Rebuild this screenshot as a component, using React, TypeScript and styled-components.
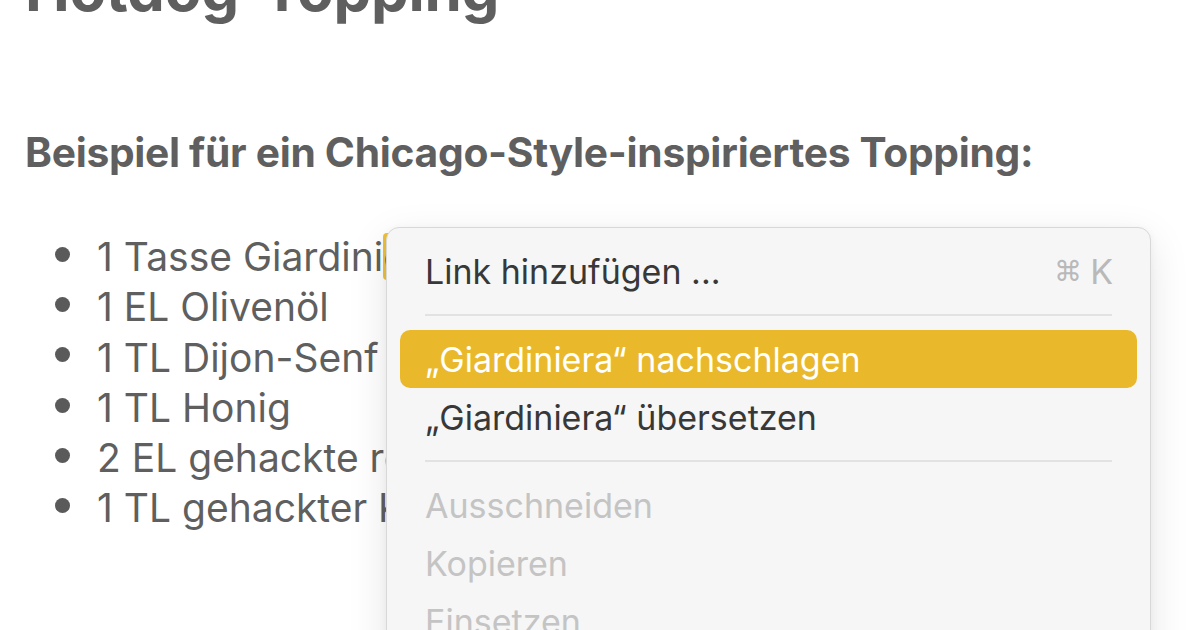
import React from "react";
import styled, { createGlobalStyle } from "styled-components";

const Global = createGlobalStyle`
  html, body { margin: 0; padding: 0; background: #ffffff; }
  body { font-family: Inter, "Noto Sans", "Liberation Sans", sans-serif; overflow: hidden; }
  #root { width: 1200px; height: 630px; overflow: hidden; position: relative; }
`;

const Page = styled.div`
  position: relative;
  width: 1200px;
  height: 630px;
  overflow: hidden;
  padding-left: 25px;
  box-sizing: border-box;
  color: #5f5f5f;
`;

const Title = styled.h1`
  margin: -41px 0 0 0;
  font-size: 60px;
  line-height: 60px;
  font-weight: 700;
  letter-spacing: -0.3px;
  white-space: nowrap;
`;

const Heading = styled.h2`
  margin: 111px 0 0 0;
  font-size: 40.75px;
  line-height: 46px;
  font-weight: 700;
  letter-spacing: -0.3px;
  white-space: nowrap;
`;

const List = styled.ul`
  list-style: none;
  margin: 56px 0 0 0;
  padding: 0 0 0 30px;
`;

const Item = styled.li`
  display: flex;
  align-items: center;
  gap: 27px;
  font-size: 39px;
  line-height: 50.3px;
  white-space: nowrap;
`;

const Bullet = styled.span`
  flex: none;
  width: 15px;
  height: 15px;
  border-radius: 50%;
  background: #5a5a5a;
  margin-top: -6px;
`;

const Mark = styled.span`
  background: #f0c23b;
  border-radius: 4px 0 0 4px;
`;

const Menu = styled.div`
  position: absolute;
  left: 386px;
  top: 227px;
  width: 765px;
  height: 520px;
  box-sizing: border-box;
  padding: 14px 13px;
  background: #f6f6f6;
  border: 1px solid #d8d8d8;
  border-radius: 13px;
  box-shadow: 0 12px 40px rgba(0, 0, 0, 0.10), 0 2px 8px rgba(0, 0, 0, 0.05);
  font-family: Inter, "Noto Sans", "Liberation Sans", sans-serif;
`;

const Row = styled.div<{ $active?: boolean; $disabled?: boolean }>`
  display: flex;
  align-items: center;
  justify-content: space-between;
  height: 58px;
  padding: 0 24px 0 25px;
  border-radius: 10px;
  font-size: 34px;
  white-space: nowrap;
  background: ${(p) => (p.$active ? "#e9b92b" : "transparent")};
  color: ${(p) => (p.$active ? "#ffffff" : p.$disabled ? "#c4c4c4" : "#383838")};
`;

const Shortcut = styled.span`
  color: #b9b9b9;
  font-family: Inter, "DejaVu Sans", sans-serif;
  display: flex;
  align-items: center;
  gap: 8px;
`;

const Cmd = styled.span`
  font-family: "DejaVu Sans", sans-serif;
  font-size: 28px;
`;

const Separator = styled.div`
  height: 2px;
  margin: 14px 25px;
  background: #e2e2e2;
`;

export default function App() {
  const items = [
    "1 EL Olivenöl",
    "1 TL Dijon-Senf",
    "1 TL Honig",
    "2 EL gehackte rote Zwiebeln",
    "1 TL gehackter Knoblauch",
  ];
  return (
    <>
      <Global />
      <Page>
        <Title>Hotdog-Topping</Title>
        <Heading>Beispiel für ein Chicago-Style-inspiriertes Topping:</Heading>
        <List>
          <Item>
            <Bullet />
            <span>
              1 Tasse Giardini<Mark>era</Mark>
            </span>
          </Item>
          {items.map((t) => (
            <Item key={t}>
              <Bullet />
              <span>{t}</span>
            </Item>
          ))}
        </List>
        <Menu>
          <Row>
            <span>Link hinzufügen ...</span>
            <Shortcut>
              <Cmd>⌘</Cmd>K
            </Shortcut>
          </Row>
          <Separator />
          <Row $active>„Giardiniera“ nachschlagen</Row>
          <Row>„Giardiniera“ übersetzen</Row>
          <Separator />
          <Row $disabled>Ausschneiden</Row>
          <Row $disabled>Kopieren</Row>
          <Row $disabled>Einsetzen</Row>
        </Menu>
      </Page>
    </>
  );
}
